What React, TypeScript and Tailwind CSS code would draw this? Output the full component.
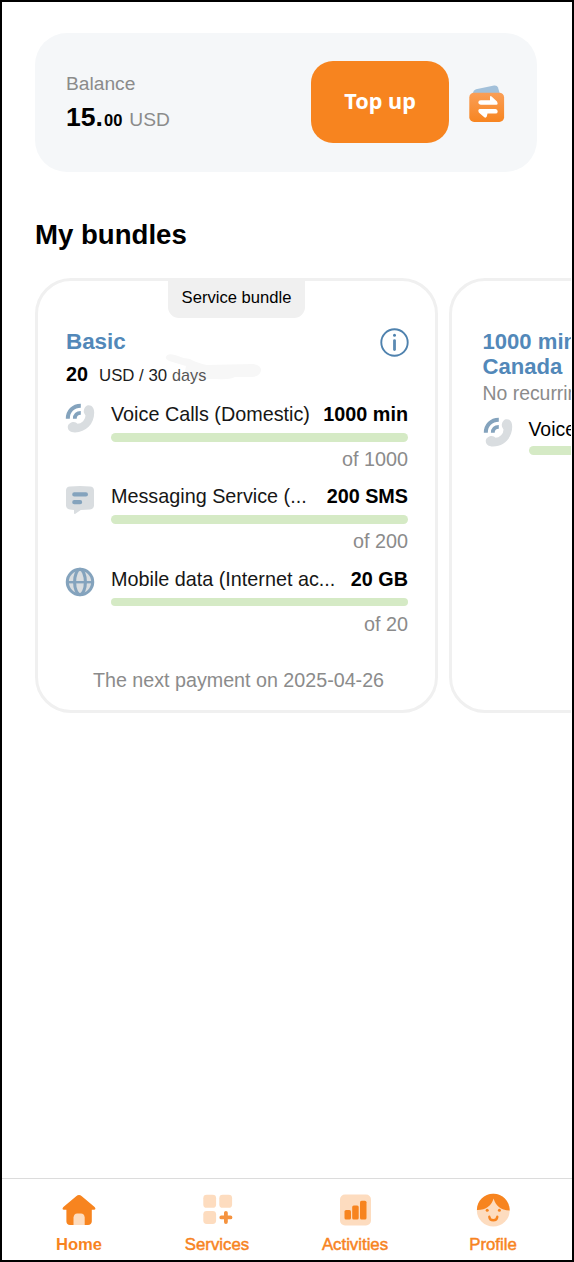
import type { ReactNode } from 'react';

interface Usage {
  name: string;
  amount: string;
  total: string;
  icon: ReactNode;
}

function WalletIcon() {
  return (
    <svg width="36" height="38" viewBox="0 0 36 38" fill="none">
      <defs>
        <linearGradient id="wallet" x1="0" y1="7" x2="0" y2="38" gradientUnits="userSpaceOnUse">
          <stop stopColor="#fa9f58" />
          <stop offset="1" stopColor="#f7841f" />
        </linearGradient>
      </defs>
      <path d="M4 7.5Q4.5 5 7 4.2L25 .5Q28 0 29 2.5L31.2 10H3.5z" fill="#a2c0da" />
      <rect x=".3" y="7.7" width="34.8" height="29.3" rx="4.8" fill="url(#wallet)" />
      <path
        d="M11.7 15.3H21V12.4Q21 10.1 22.9 11.7L28 16.6Q29.5 19.8 27.4 19.8H11.7Q9.3 19.6 9.3 17.5T11.7 15.3zM11 24H26.5Q28.7 24.2 28.7 26.4T26.5 28.6H18.5L17.8 31.6Q16.8 33.5 15 32.1L9.8 27.4Q8.5 24.1 11 24z"
        fill="#fff"
      />
    </svg>
  );
}

function InfoIcon() {
  return (
    <svg width="29" height="29" viewBox="0 0 29 29" fill="none">
      <circle cx="14.5" cy="14.5" r="13.2" stroke="#4f82ae" strokeWidth="1.9" />
      <circle cx="14.5" cy="7.2" r="1.5" fill="#4f82ae" />
      <path d="M14.5 12.6v8.9" stroke="#5b8ab3" strokeWidth="2.8" strokeLinecap="round" />
    </svg>
  );
}

function PhoneIcon() {
  return (
    <svg className="shrink-0" width="30" height="30" viewBox="0 0 30 30" fill="none">
      <path
        d="M22.8 2.2C27 1.6 29.2 5 29.2 9.8C29.2 21 20.8 29.4 10 29.4C5.2 29.4 2.4 27 2.8 23.2C3.4 20.1 8.3 17.7 10.9 19.6L12.6 20.8Q15.2 20.8 18.1 18.2Q20.6 15.5 20.5 12.5L19.5 10.8C17.6 8 19.8 2.8 22.8 2.2z"
        fill="#d9dde0"
      />
      <path d="M2.8 15.8C2.7 8.2 8.2 2.7 15.8 2.7" stroke="#84a3bd" strokeWidth="4" />
      <path d="M9.8 15.8C9.8 12 12 9.8 15.8 9.8" stroke="#84a3bd" strokeWidth="3.8" />
    </svg>
  );
}

function MessageIcon() {
  return (
    <svg width="30" height="30" viewBox="0 0 30 30" fill="none">
      <path
        d="M5 1.4Q15 .6 25 1.4Q28.8 1.6 29 5.2V20.6Q28.8 24.2 25 24.6L15.8 25L10.4 28.8Q9 29.5 9 27.8V24.9L5 24.6Q1.2 24.2 1 20.6V5.2Q1.2 1.6 5 1.4z"
        fill="#d9dde0"
      />
      <path d="M9.3 9.4h11.6M9.3 17.2h5.8" stroke="#84a3bd" strokeWidth="4.2" strokeLinecap="round" />
    </svg>
  );
}

function GlobeIcon() {
  return (
    <svg width="30" height="30" viewBox="0 0 30 30" fill="none" stroke="#84a3bd" strokeWidth="3.1">
      <circle cx="15" cy="15" r="12.7" fill="#d9dde0" />
      <ellipse cx="15" cy="15" rx="5.4" ry="12.7" />
      <path d="M2 15.2h26" strokeWidth="2.4" />
    </svg>
  );
}

function HomeIcon() {
  return (
    <svg width="34" height="34" viewBox="0 0 34 34" fill="none">
      <path
        d="M14.2 3.2Q17 1 19.8 3.2L32.6 14Q34.6 16.7 31.8 16.7H29.8V28.4Q29.5 31.8 26 32H8Q4.6 31.8 4.4 28.4V16.7H2Q-.6 16.7 1.4 14z"
        fill="#f7841f"
      />
      <path d="M11.5 32V24.5Q12 20.6 15.2 20.6H19Q22.3 20.6 22.7 24.5V32z" fill="#fddcbf" />
    </svg>
  );
}

function ServicesIcon() {
  return (
    <svg width="34" height="34" viewBox="0 0 34 34" fill="none">
      <g fill="#fddcbf">
        <rect x="3.3" y="1.8" width="12.8" height="13" rx="3.4" />
        <rect x="19.3" y="1.8" width="12.8" height="13" rx="3.4" />
        <rect x="3.3" y="17.9" width="12.8" height="13" rx="3.4" />
      </g>
      <path d="M25.9 19.8v9.2M21.3 24.4h9.2" stroke="#f5933f" strokeWidth="3.8" strokeLinecap="round" />
    </svg>
  );
}

function ActivitiesIcon() {
  return (
    <svg width="34" height="34" viewBox="0 0 34 34" fill="none">
      <rect x="2" y="1.5" width="31" height="31" rx="5" fill="#fddcbf" />
      <g fill="#f7841f">
        <rect x="6.5" y="17" width="6.5" height="9.5" rx="1.6" />
        <rect x="14.2" y="12.5" width="6.5" height="14" rx="1.6" />
        <rect x="22" y="7.7" width="6.5" height="18.8" rx="1.6" />
      </g>
    </svg>
  );
}

function ProfileIcon() {
  return (
    <svg width="34" height="34" viewBox="0 0 34 34" fill="none">
      <circle cx="17.3" cy="17.2" r="16.4" fill="#fddcbf" />
      <path
        d="M.9 17C1 8 8.2.8 17.3.8S33.6 8 33.7 17.4C24.5 17.3 19.5 12.5 17.6 5.5C15.5 12.5 10 17.2.9 17z"
        fill="#f7841f"
      />
      <circle cx="11.2" cy="17.3" r="1.5" fill="#f7841f" />
      <circle cx="23.4" cy="17.3" r="1.5" fill="#f7841f" />
      <path d="M13.3 23.8Q13.7 27.3 17.3 27.3T21.3 23.8" stroke="#f7841f" strokeWidth="2.4" strokeLinecap="round" />
    </svg>
  );
}

const USAGES: Usage[] = [
  { name: 'Voice Calls (Domestic)', amount: '1000 min', total: 'of 1000', icon: <PhoneIcon /> },
  { name: 'Messaging Service (...', amount: '200 SMS', total: 'of 200', icon: <MessageIcon /> },
  { name: 'Mobile data (Internet ac...', amount: '20 GB', total: 'of 20', icon: <GlobeIcon /> },
];

const TABS = [
  { label: 'Home', icon: <HomeIcon />, active: true },
  { label: 'Services', icon: <ServicesIcon />, active: false },
  { label: 'Activities', icon: <ActivitiesIcon />, active: false },
  { label: 'Profile', icon: <ProfileIcon />, active: false },
];

function UsageRow({ name, amount, total, icon }: Usage) {
  return (
    <div className="flex h-[82.3px] gap-4">
      <div className="w-[30px] shrink-0 pt-[0.5px]">{icon}</div>
      <div className="w-[297px] shrink-0">
        <div className="flex justify-between whitespace-nowrap text-[19.8px] leading-6">
          <span className="text-[#161616]">{name}</span>
          <span className="font-bold text-black">{amount}</span>
        </div>
        <div className="mt-[7px] h-[8.6px] rounded-full bg-[#d5eac5]" />
        <div className="mt-[5.5px] text-right text-[19.8px] leading-6 text-[#8b8b8b]">{total}</div>
      </div>
    </div>
  );
}

export default function App() {
  return (
    <div className="flex h-[1262px] w-[574px] flex-col overflow-hidden border-2 border-black bg-white font-['Liberation_Sans',Arial,sans-serif]">
      {/* Balance */}
      <section className="ml-[33px] mt-[30.5px] flex h-[139px] w-[502px] shrink-0 items-center rounded-[32px] bg-[#f5f7f9] pl-[30px]">
        <div className="w-[246px] pl-px pt-[3px]">
          <div className="text-[19.2px] leading-6 text-[#8b8b8b]">Balance</div>
          <div className="mt-[5px] flex items-baseline text-[26.6px] leading-8 font-bold text-black">
            <span>15.</span>
            <span className="ml-px text-[16.5px]">00</span>
            <span className="ml-[7px] text-[19.2px] font-normal text-[#8b8b8b]">USD</span>
          </div>
        </div>
        <button className="h-[82px] w-[138px] rounded-[22px] bg-[#f7841f] pb-0.5 font-['Noto_Sans',sans-serif] text-[21.7px] font-bold text-white">
          Top up
        </button>
        <div className="ml-5 pt-[3px]">
          <WalletIcon />
        </div>
      </section>

      <h1 className="ml-[33px] mt-[47px] text-[27.6px] leading-8 font-bold text-black">My bundles</h1>

      {/* Bundle cards */}
      <section className="ml-[33px] mt-[27.5px] flex h-[435px] w-[535.5px] shrink-0 gap-[11px] overflow-hidden">
        <article className="w-[403px] shrink-0 rounded-[36px] border-[3px] border-[#f0f0f0] px-[27px]">
          <div className="mx-auto flex h-[37px] w-[137px] items-center justify-center rounded-b-[11px] bg-[#f0f0f0] pb-[3px] text-[16.6px] text-black">
            Service bundle
          </div>
          <div className="mt-[9.5px] flex h-[29px] w-[344px] justify-between pl-px">
            <h2 className="text-[22.4px] leading-[28px] font-bold text-[#5288b9]">Basic</h2>
            <InfoIcon />
          </div>
          <div className="relative mt-[5px] h-6 pl-px">
            {/* Soft brush mark behind the period */}
            <svg className="absolute left-[100px] top-[-9px]" width="100" height="32" viewBox="0 0 100 32" fill="none">
              <path
                d="M1 4Q2 0 10 2Q17 5 25 6Q32 10 42 12L88 11Q96 12 96 17Q96 23 87 24L70 24Q64 27 52 26H26Q18 24 21 13L4 8Q0 6 1 4z"
                fill="#f7f7f7"
              />
            </svg>
            <div className="relative flex items-baseline text-[16.8px] leading-6 text-[#1c1c1c]">
              <b className="text-[19.8px] text-black">20</b>
              <span className="ml-[11px]">USD / 30</span>
              <span className="ml-[5px] text-[16.2px] text-[#555]">days</span>
            </div>
          </div>
          <div className="mt-[16.5px] w-[343px]">
            {USAGES.map((usage) => (
              <UsageRow key={usage.name} {...usage} />
            ))}
          </div>
          <p className="mt-[19px] pl-1 text-center text-[19.7px] leading-6 text-[#8b8b8b]">
            The next payment on 2025-04-26
          </p>
        </article>

        <article className="w-[403px] shrink-0 rounded-[36px] border-[3px] border-[#f0f0f0] px-[30.5px] pt-[48px] whitespace-nowrap">
          <h2 className="text-[22.1px] leading-[25px] font-bold text-[#5288b9]">
            1000 min
            <br />
            Canada
          </h2>
          <p className="mt-0.5 text-[19.4px] leading-6 text-[#8b8b8b]">No recurring payments</p>
          <div className="mt-[11.5px] flex gap-4">
            <PhoneIcon />
            <div className="w-[297px] shrink-0">
              <div className="text-[19.4px] leading-6 text-black">Voice Calls</div>
              <div className="mt-[5.5px] h-[8.6px] rounded-full bg-[#d5eac5]" />
            </div>
          </div>
        </article>
      </section>

      {/* Bottom navigation */}
      <nav className="mt-auto flex h-[82px] shrink-0 border-t border-[#dcdcdc] px-2">
        {TABS.map((tab) => (
          <a key={tab.label} className="flex w-[138px] flex-col items-center pt-[14px] text-[#f7841f]">
            {tab.icon}
            <span
              className={
                tab.active
                  ? 'mt-2 text-[16.6px] leading-5 font-bold'
                  : 'mt-2 text-[16.8px] leading-5 [-webkit-text-stroke:0.5px_#f7841f]'
              }
            >
              {tab.label}
            </span>
          </a>
        ))}
      </nav>
    </div>
  );
}
